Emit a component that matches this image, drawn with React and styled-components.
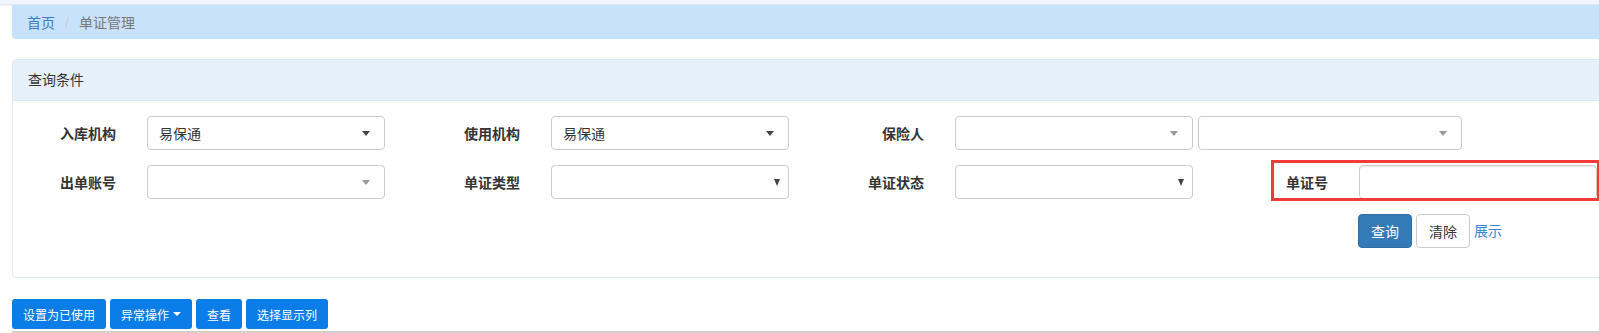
import React from 'react';
import styled, { createGlobalStyle } from 'styled-components';

const GlobalStyle = createGlobalStyle`
	html, body {
		margin: 0;
		padding: 0;
		overflow: hidden;
		background: #fff;
	}
	body {
		font-family: "Liberation Sans", "Noto Sans CJK SC", sans-serif;
		font-size: 14px;
		color: #333;
	}
`;

const Page = styled.div`
	width: 1640px;
`;

const TopStrip = styled.div`
	height: 4px;
	background: #f0f5fc;
	box-shadow: 0 1px 2px rgba(160, 190, 230, 0.5);
`;

const Content = styled.div`
	padding: 1px 0 0 12px;
`;

const Breadcrumb = styled.ol`
	display: flex;
	align-items: center;
	height: 34px;
	margin: 0;
	padding: 0 15px;
	list-style: none;
	background: #c8e2fc;
	border-radius: 0 0 4px 4px;
`;

const Crumb = styled.li`
	color: ${(p) => (p.$active ? '#777' : '#3a7dc0')};
	&:not(:first-child)::before {
		content: '/';
		color: #ccc;
		padding: 0 10px;
	}
`;

const Panel = styled.div`
	margin-top: 20px;
	border: 1px solid #dfeaf7;
	border-radius: 4px;
	background: #fff;
`;

const PanelHeading = styled.div`
	padding: 10px 15px;
	line-height: 20px;
	background: #e6f0fb;
	border-bottom: 1px solid #dfeaf7;
	border-radius: 3px 3px 0 0;
`;

const PanelBody = styled.div`
	display: grid;
	grid-template-columns: repeat(4, 404px);
	row-gap: 15px;
	padding: 15px 0 29px;
	margin-left: -1px;
`;

const Field = styled.div`
	position: relative;
	display: flex;
	align-items: center;
	${(p) => p.$marked && `
		&::after {
			content: '';
			position: absolute;
			left: 47px;
			top: -5px;
			right: 28px;
			bottom: -2px;
			border: 3px solid #f33b3b;
			pointer-events: none;
		}
	`}
`;

const Label = styled.label`
	width: 104px;
	margin-right: 31px;
	text-align: right;
	font-weight: bold;
	color: #333;
	flex-shrink: 0;
`;

const SelectBox = styled.div`
	position: relative;
	box-sizing: border-box;
	width: ${(p) => p.$width || 238}px;
	height: 34px;
	padding: 0 11px;
	display: flex;
	align-items: center;
	border: 1px solid #ccc;
	border-radius: 4px;
	background: #fff;
	color: #333;
	flex-shrink: 0;
	& + & {
		margin-left: 5px;
	}
`;

const Caret = styled.span`
	position: absolute;
	right: ${(p) => (p.$native ? 8 : 14)}px;
	top: 50%;
	margin-top: ${(p) => (p.$native ? -3 : -2)}px;
	width: 0;
	height: 0;
	border-top: ${(p) => (p.$native ? 7 : 5)}px solid ${(p) => (p.$muted ? '#999' : '#444')};
	border-left: ${(p) => (p.$native ? 3.5 : 4)}px solid transparent;
	border-right: ${(p) => (p.$native ? 3.5 : 4)}px solid transparent;
`;

const TextInput = styled.input`
	box-sizing: border-box;
	width: 238px;
	height: 34px;
	border: 1px solid #ccc;
	border-radius: 4px;
	box-shadow: inset 0 1px 1px rgba(0, 0, 0, 0.075);
	padding: 6px 12px;
	font: inherit;
	flex-shrink: 0;
`;

const Actions = styled.div`
	grid-column: 4;
	display: flex;
	align-items: center;
	gap: 4px;
	padding-left: 134px;
`;

const Button = styled.button`
	box-sizing: border-box;
	height: 34px;
	padding: 0 12px;
	font: inherit;
	border-radius: 4px;
	border: 1px solid ${(p) => (p.$primary ? '#2e6da4' : '#ccc')};
	background: ${(p) => (p.$primary ? '#337ab7' : '#fff')};
	color: ${(p) => (p.$primary ? '#fff' : '#333')};
`;

const Link = styled.a`
	color: #3a86d4;
	text-decoration: none;
	margin-top: -2px;
`;

const Toolbar = styled.div`
	display: flex;
	gap: 4px;
	margin-top: 21px;
`;

const ToolButton = styled.button`
	height: 30px;
	padding: 0 11px;
	border: none;
	border-radius: 3px;
	background: #0a7de9;
	color: #fff;
	font: inherit;
	font-size: 12px;
	display: flex;
	align-items: center;
	gap: 4px;
`;

const SmallCaret = styled.span`
	width: 0;
	height: 0;
	border-top: 4px solid #fff;
	border-left: 4px solid transparent;
	border-right: 4px solid transparent;
`;

const TableTop = styled.div`
	margin-top: 2px;
	border-top: 2px solid #cfcfcf;
`;

const Select = ({ value, muted, native, width }) => (
	<SelectBox $width={width}>
		{value}
		<Caret $muted={muted} $native={native} />
	</SelectBox>
);

export default function App() {
	return (
		<Page>
			<GlobalStyle />
			<TopStrip />
			<Content>
				<Breadcrumb>
					<Crumb>首页</Crumb>
					<Crumb $active>单证管理</Crumb>
				</Breadcrumb>

				<Panel>
					<PanelHeading>查询条件</PanelHeading>
					<PanelBody>
						<Field>
							<Label>入库机构</Label>
							<Select value="易保通" />
						</Field>
						<Field>
							<Label>使用机构</Label>
							<Select value="易保通" />
						</Field>
						<Field>
							<Label>保险人</Label>
							<Select muted />
							<Select muted width={264} />
						</Field>
						<div />

						<Field>
							<Label>出单账号</Label>
							<Select muted />
						</Field>
						<Field>
							<Label>单证类型</Label>
							<Select native />
						</Field>
						<Field>
							<Label>单证状态</Label>
							<Select native />
						</Field>
						<Field $marked>
							<Label>单证号</Label>
							<TextInput />
						</Field>

						<Actions>
							<Button $primary>查询</Button>
							<Button>清除</Button>
							<Link href="#">展示</Link>
						</Actions>
					</PanelBody>
				</Panel>

				<Toolbar>
					<ToolButton>设置为已使用</ToolButton>
					<ToolButton>
						异常操作
						<SmallCaret />
					</ToolButton>
					<ToolButton>查看</ToolButton>
					<ToolButton>选择显示列</ToolButton>
				</Toolbar>
				<TableTop />
			</Content>
		</Page>
	);
}
